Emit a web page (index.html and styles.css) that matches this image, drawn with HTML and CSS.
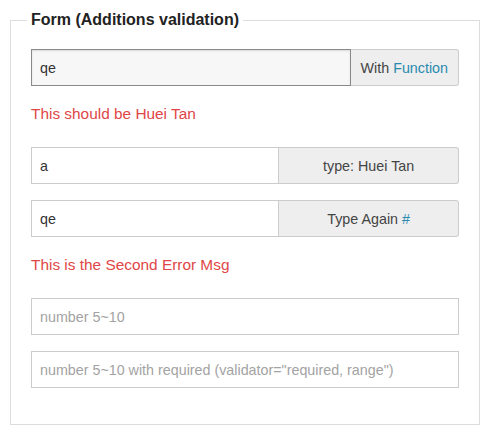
FILE: index.html
```html
<!DOCTYPE html>
<html>
<head>
<meta charset="utf-8">
<link rel="stylesheet" href="styles.css">
</head>
<body>
<fieldset class="panel">
  <legend class="panel-title">Form (Additions validation)</legend>

  <div class="group">
    <input class="field field-focus" type="text" value="qe">
    <span class="addon addon-auto">With <a class="link" href="#">Function</a></span>
  </div>
  <div class="error">This should be Huei Tan</div>

  <div class="group group-split">
    <input class="field" type="text" value="a">
    <span class="addon">type: Huei Tan</span>
  </div>
  <div class="group group-split">
    <input class="field" type="text" value="qe">
    <span class="addon">Type Again <a class="link" href="#">#</a></span>
  </div>
  <div class="error">This is the Second Error Msg</div>

  <div class="group">
    <input class="field field-solo" type="text" placeholder="number 5~10">
  </div>
  <div class="group">
    <input class="field field-solo" type="text" placeholder="number 5~10 with required (validator=&quot;required, range&quot;)">
  </div>
</fieldset>
</body>
</html>
```

FILE: styles.css
```css
html, body {
  margin: 0;
  background: #ffffff;
}
body {
  padding: 10px 12px 0 10px;
  font-family: "Liberation Sans", Arial, sans-serif;
  color: #333333;
}
.panel {
  margin: 0;
  width: 470px;
  box-sizing: border-box;
  border: 1px solid #dddddd;
  padding: 19px 20px 20px 20px;
}
.panel-title {
  font-size: 16px;
  font-weight: bold;
  line-height: 20px;
  color: #222222;
  padding: 0 4px;
  margin-left: -4px;
}
.group {
  display: flex;
  height: 37px;
  margin-bottom: 16px;
}
.group-split {
  display: grid;
  grid-template-columns: 58% 1fr;
}
.field {
  box-sizing: border-box;
  height: 37px;
  min-width: 0;
  flex: 1 1 auto;
  margin: 0;
  padding: 0 8px;
  border: 1px solid #cccccc;
  border-radius: 0;
  background: #ffffff;
  font-family: "Liberation Sans", Arial, sans-serif;
  font-size: 14.3px;
  color: #333333;
  outline: none;
}
.field::placeholder {
  color: #a3a3a3;
}
.field-focus {
  border-color: #8a8a8a;
  background: #f7f7f7;
  box-shadow: inset 0 1px 2px rgba(0, 0, 0, 0.12);
}
.field-solo {
  width: 100%;
}
.addon {
  box-sizing: border-box;
  height: 37px;
  display: flex;
  align-items: center;
  justify-content: center;
  padding: 0 10px;
  border: 1px solid #cccccc;
  border-left: 0;
  border-radius: 0 3px 3px 0;
  background: #eeeeee;
  font-size: 14.3px;
  color: #444444;
  white-space: nowrap;
}
.addon-auto {
  flex: 0 0 auto;
}
.link {
  color: #2a8ab0;
  text-decoration: none;
  margin-left: 4px;
}
.error {
  font-size: 15.4px;
  line-height: 20px;
  color: #e04646;
  margin-top: 18px;
  margin-bottom: 23px;
}
```
